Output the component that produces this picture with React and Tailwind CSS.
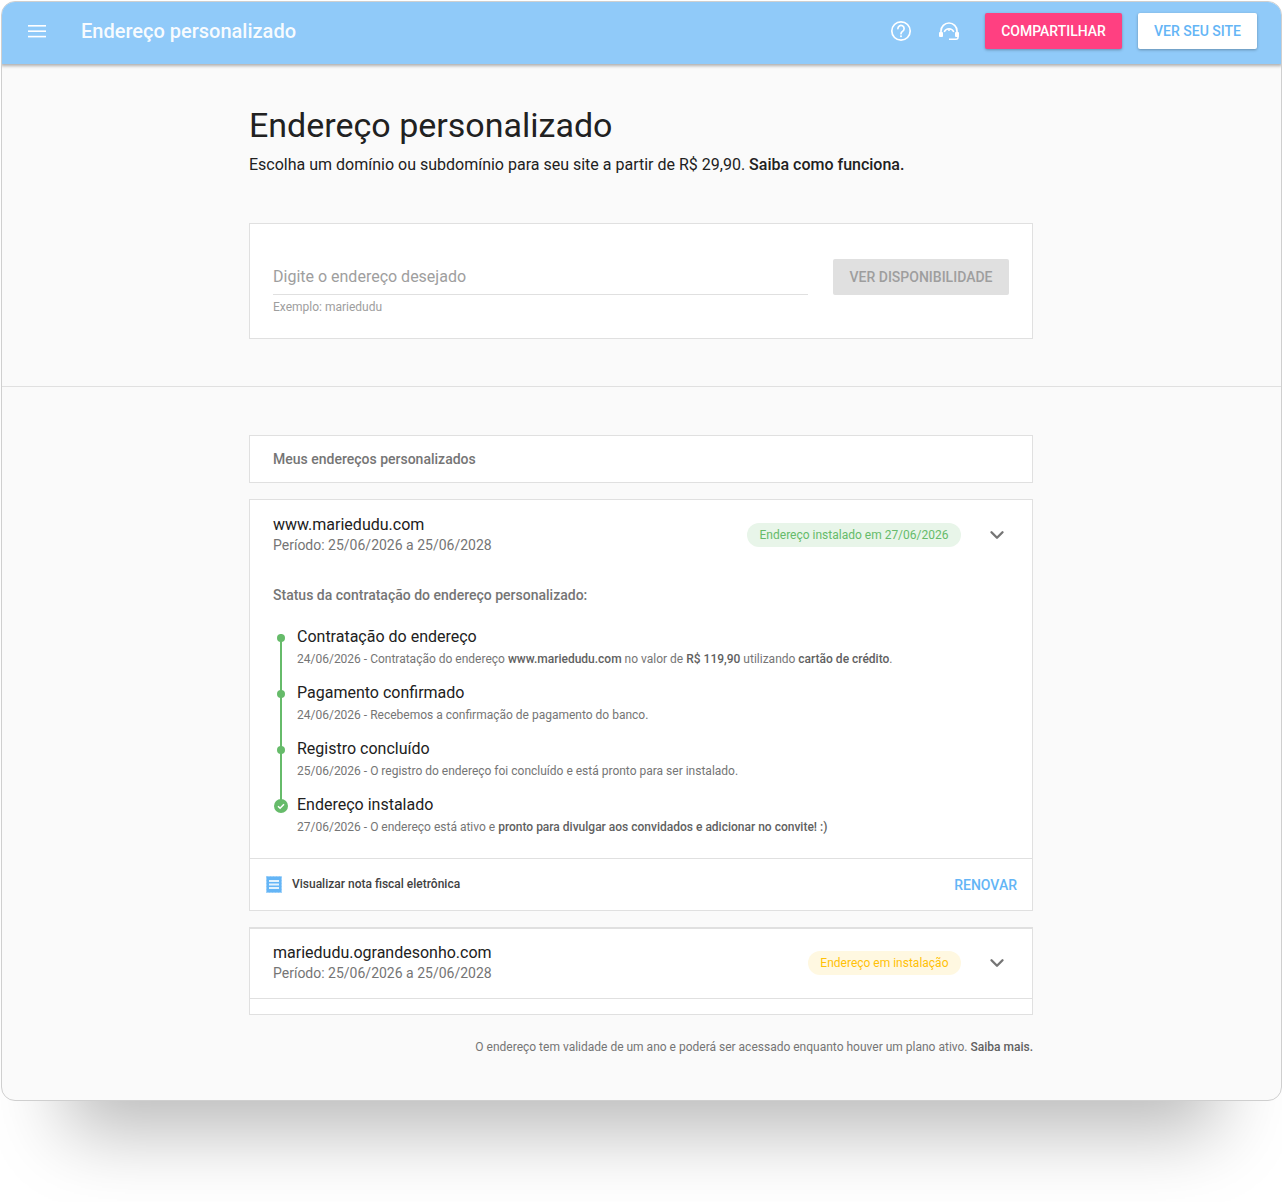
import React from "react";
import { ChevronDown } from "lucide-react";

const steps = [
  {
    title: "Contratação do endereço",
    detail: (
      <>
        24/06/2026 - Contratação do endereço <b className="font-medium text-[#616161]">www.mariedudu.com</b> no valor de{" "}
        <b className="font-medium text-[#616161]">R$ 119,90</b> utilizando <b className="font-medium text-[#616161]">cartão de crédito</b>.
      </>
    ),
  },
  { title: "Pagamento confirmado", detail: "24/06/2026 - Recebemos a confirmação de pagamento do banco." },
  { title: "Registro concluído", detail: "25/06/2026 - O registro do endereço foi concluído e está pronto para ser instalado." },
  {
    title: "Endereço instalado",
    done: true,
    detail: (
      <>
        27/06/2026 - O endereço está ativo e{" "}
        <b className="font-medium text-[#616161]">pronto para divulgar aos convidados e adicionar no convite! :)</b>
      </>
    ),
  },
];

const MenuIcon = () => (
  <svg width="18" height="14" viewBox="0 0 18 14" fill="white">
    <rect y="1" width="18" height="1.6" />
    <rect y="6.4" width="18" height="1.6" />
    <rect y="11.8" width="18" height="1.6" />
  </svg>
);

const HelpIcon = () => (
  <svg width="22" height="22" viewBox="0 0 22 22" fill="none" stroke="white" strokeWidth="1.7">
    <circle cx="11" cy="11" r="9.2" />
    <path d="M7.9 8.6a3.1 3.1 0 1 1 4.9 2.5c-1.1.8-1.8 1.3-1.8 2.6" strokeLinecap="round" />
    <circle cx="11" cy="16.2" r="1" fill="white" stroke="none" />
  </svg>
);

const SupportIcon = () => (
  <svg width="22" height="22" viewBox="0 0 22 22" fill="none" stroke="white" strokeWidth="1.7">
    <path d="M3 13V11a8 8 0 0 1 16 0V13" />
    <path d="M6.200 12a5.200 5.200 0 0 1 9.600 0" strokeWidth="1.400" />
    <rect x="1" y="12" width="4" height="5" rx="1" fill="white" stroke="none" />
    <rect x="17" y="12" width="4" height="5" rx="1" fill="white" stroke="none" />
    <circle cx="11" cy="10" r="1" fill="white" stroke="none" />
    <path d="M20 16V17.200a2 2 0 0 1-2 2H11" strokeWidth="1.500" />
  </svg>
);

const ReceiptIcon = () => (
  <svg width="16" height="17" viewBox="0 0 16 17">
    <rect x="0.500" y="0.500" width="15" height="16" fill="#64b5f6" stroke="#90caf9" strokeDasharray="2 1" />
    <rect x="3" y="4" width="10" height="2" fill="#e3f2fd" />
    <rect x="3" y="7.500" width="10" height="2" fill="#e3f2fd" />
    <rect x="3" y="11" width="10" height="2" fill="#e3f2fd" />
  </svg>
);

const CheckDot = () => (
  <svg width="14" height="14" viewBox="0 0 14 14" className="relative">
    <circle cx="7" cy="7" r="7" fill="#66bb6a" />
    <path d="M4 7.200l2.100 2.100L10 5.300" fill="none" stroke="white" strokeWidth="1.500" />
  </svg>
);

const StatusPill = ({ className, children }) => (
  <span className={`flex h-6 items-center rounded-full px-[12.5px] text-xs ${className}`}>{children}</span>
);

const AddressHead = ({ name, pill }) => (
  <div className="flex items-center justify-between pl-[23px] pr-6">
    <div>
      <div className="text-base leading-5 text-[#212121]">{name}</div>
      <div className="text-sm leading-5 text-[#757575]">Período: 25/06/2026 a 25/06/2028</div>
    </div>
    <div className="flex items-center gap-[25px]">
      {pill}
      <ChevronDown className="h-[22px] w-[22px] text-[#757575]" strokeWidth={2.6} />
    </div>
  </div>
);

export default function App() {
  return (
    <div className="h-[1202px] bg-white pl-px pt-px font-['Roboto',sans-serif]">
      <div className="h-[1100px] overflow-hidden rounded-[14px] border border-[#cfcfcf] bg-[#fafafa] shadow-[0_96px_70px_-65px_rgba(0,0,0,0.27)]">
        {/* Top bar */}
        <header className="-mx-px -mt-px flex h-[63px] items-center bg-[#90caf9] pb-[3px] pl-[27px] pr-[25px] shadow-[0_2px_3px_rgba(0,0,0,0.3)]">
          <MenuIcon />
          <h2 className="ml-[35px] text-xl font-medium text-white/95">Endereço personalizado</h2>
          <div className="ml-auto flex items-center">
            <HelpIcon />
            <div className="ml-[26px]">
              <SupportIcon />
            </div>
            <button className="ml-[25px] h-9 w-[137px] rounded-[2px] bg-[#ff4081] text-sm font-medium text-white shadow-[0_1px_3px_rgba(0,0,0,0.3)]">
              COMPARTILHAR
            </button>
            <button className="ml-4 h-9 w-[119px] rounded-[2px] bg-white text-sm font-medium text-[#64b5f6] shadow-[0_1px_3px_rgba(0,0,0,0.3)]">
              VER SEU SITE
            </button>
          </div>
        </header>

        {/* Search section */}
        <section className="border-b border-[#e0e0e0] pb-[47px] pt-[41px]">
          <div className="ml-[247px] w-[784px]">
            <h1 className="text-[34px] leading-10 text-[#212121]">Endereço personalizado</h1>
            <p className="mt-[10px] text-base leading-5 text-[#212121]">
              Escolha um domínio ou subdomínio para seu site a partir de R$ 29,90. <b className="font-medium">Saiba como funciona.</b>
            </p>
            <div className="mt-[48px] flex h-[116px] items-start border border-[#e0e0e0] bg-white pl-[23px] pr-[23px] pt-[35px]">
              <div className="w-[535px]">
                <div className="h-9 border-b border-[#e0e0e0] pt-2 text-base leading-5 text-[#9e9e9e]">Digite o endereço desejado</div>
                <div className="mt-1 text-xs leading-4 text-[#9e9e9e]">Exemplo: mariedudu</div>
              </div>
              <button className="ml-auto h-9 w-[176px] rounded-[2px] bg-[#e0e0e0] text-sm font-medium text-[#9e9e9e]">
                VER DISPONIBILIDADE
              </button>
            </div>
          </div>
        </section>

        {/* Addresses */}
        <section className="ml-[247px] w-[784px] pt-12">
          <div className="flex h-12 items-center border border-[#e0e0e0] bg-white pl-[23px] text-sm font-medium text-[#757575]">
            Meus endereços personalizados
          </div>

          <div className="mt-4 h-[412px] border border-[#e0e0e0] bg-white pt-[15px]">
            <AddressHead
              name="www.mariedudu.com"
              pill={<StatusPill className="bg-[#e8f5e9] text-[#66bb6a]">Endereço instalado em 27/06/2026</StatusPill>}
            />
            <div className="ml-[23px] mt-[30px] text-sm font-medium leading-5 text-[#757575]">Status da contratação do endereço personalizado:</div>
            <ol className="relative ml-[23px] mt-[21px] h-[232px]">
              <div className="absolute left-[7px] top-[8px] h-[168px] w-0.5 bg-[#66bb6a]" />
              {steps.map((step) => (
                <li key={step.title} className="relative h-14 pl-6 pt-[2px]">
                  <span className="absolute left-[1px] top-[5px] flex h-[14px] w-[14px] items-center justify-center">
                    {step.done ? <CheckDot /> : <span className="h-2 w-2 rounded-full bg-[#66bb6a]" />}
                  </span>
                  <div className="text-base leading-[18px] text-[#212121]">{step.title}</div>
                  <div className="mt-[5px] text-xs leading-4 text-[#757575]">{step.detail}</div>
                </li>
              ))}
            </ol>
            <div className="flex h-[52px] items-center border-t border-[#e0e0e0] pl-[16px] pr-[15px]">
              <ReceiptIcon />
              <span className="ml-[10px] pb-0.5 text-xs font-medium text-[#424242]">Visualizar nota fiscal eletrônica</span>
              <span className="ml-auto text-sm font-medium text-[#64b5f6]">RENOVAR</span>
            </div>
          </div>

          <div className="mt-4 h-[88px] border border-[#e0e0e0] border-t-2 bg-white pt-[14px]">
            <AddressHead
              name="mariedudu.ograndesonho.com"
              pill={<StatusPill className="bg-[#fff8e1] text-[#ffc107]">Endereço em instalação</StatusPill>}
            />
            <div className="mt-[15px] border-t border-[#e0e0e0]" />
          </div>

          <p className="mt-6 text-right text-xs leading-4 text-[#757575]">
            O endereço tem validade de um ano e poderá ser acessado enquanto houver um plano ativo. <b className="font-medium text-[#616161]">Saiba mais.</b>
          </p>
        </section>
      </div>
    </div>
  );
}
